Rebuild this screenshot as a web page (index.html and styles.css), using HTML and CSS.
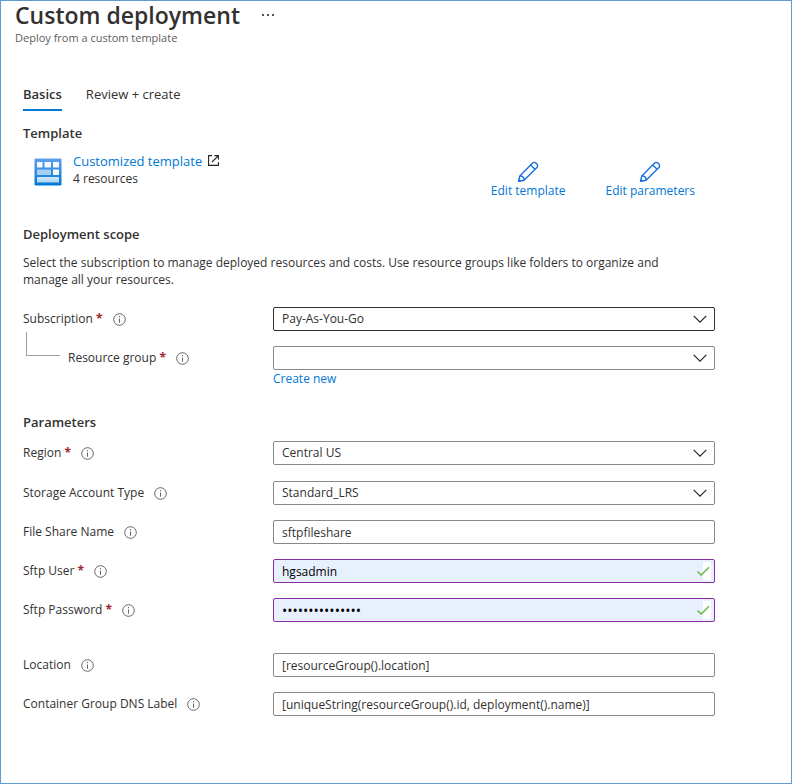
FILE: index.html
```html
<!DOCTYPE html>
<html lang="en">
<head>
    <meta charset="UTF-8">
    <meta name="viewport" content="width=device-width, initial-scale=1.0">
    <title>Custom deployment</title>
    <link rel="stylesheet" href="styles.css">
</head>
<body>
    <svg class="sprite" aria-hidden="true">
        <symbol id="info" viewBox="0 0 13 13">
            <circle cx="6.5" cy="6.5" r="5.8" fill="none" stroke="#666" stroke-width="1" />
            <path d="M6 3h1v1.3H6zM6 5.5h1v4.3H6z" fill="#666" />
        </symbol>
        <symbol id="pencil" viewBox="0 0 22 22">
            <path d="M1.5 21.500l1.3-5.600L15.600 3.100a2.300 2.300 0 0 1 3.300 0l1 1a2.300 2.300 0 0 1 0 3.300L7.100 20.200zM13.700 5l4.300 4.300M2.800 15.900c2.500 0 4.300 1.800 4.300 4.300" fill="none" stroke="#1b6fe0" stroke-width="1.4" stroke-linejoin="round" />
            <path d="M1.5 21.5l.6-2.6 2 2z" fill="#1b6fe0" />
        </symbol>
        <symbol id="chevron" viewBox="0 0 14 8">
            <path d="M.7.8L7 7.1 13.3.8" fill="none" stroke="#222" stroke-width="1.2" />
        </symbol>
        <symbol id="check" viewBox="0 0 14 18">
            <path d="M6 0h8v18H6z" fill="#fff" />
            <path d="M.5 9.5l3.7 3.5L12 5.3" fill="none" stroke="#6bb53f" stroke-width="1.4" />
        </symbol>
    </svg>

    <header>
        <div class="title">
            <h1>Custom deployment</h1>
            <button type="button" class="more" aria-label="More">
                <svg width="12" height="2" viewBox="0 0 12 2"><path d="M0 0h2v2H0zM5 0h2v2H5zM10 0h2v2h-2z" fill="#555" /></svg>
            </button>
        </div>
        <p>Deploy from a custom template</p>
    </header>

    <main>
        <nav>
            <a href="#basics" class="active">Basics</a>
            <a href="#review">Review + create</a>
        </nav>

        <section>
            <h2>Template</h2>
            <div class="template">
                <svg class="template-icon" width="28" height="28" viewBox="0 0 28 28">
                    <defs>
                        <linearGradient id="frame" x1="0" y1="0" x2="0" y2="1">
                            <stop offset="0" stop-color="#5ea0ef" />
                            <stop offset="1" stop-color="#0078d4" />
                        </linearGradient>
                        <linearGradient id="tile" x1="0" y1="0" x2="0" y2="1">
                            <stop offset="0" stop-color="#d6e9fc" />
                            <stop offset="1" stop-color="#a9d3f7" />
                        </linearGradient>
                    </defs>
                    <rect x=".5" y=".5" width="27" height="27" rx="1" fill="url(#frame)" />
                    <path d="M3 4h5.5v5.5H3zM10.5 4H17v5.5h-6.5zM19 4h6v5.5h-6zM19 11.5h6V17h-6z" fill="#f7faff" />
                    <path d="M3 11.5h14V17H3z" fill="#a9cff7" />
                    <path d="M3 19h22v5.5H3z" fill="url(#tile)" />
                </svg>
                <div class="template-text">
                    <a href="#template">Customized template
                        <svg width="11" height="11" viewBox="0 0 11 11"><path d="M4 .6H.6v9.8h9.8V7M6.5.6h3.9v4M10.2.8L4 7" fill="none" stroke="#222" stroke-width="1.1" /></svg>
                    </a>
                    <span>4 resources</span>
                </div>
                <div class="actions">
                    <button type="button"><svg width="22" height="22"><use href="#pencil" /></svg>Edit template</button>
                    <button type="button"><svg width="22" height="22"><use href="#pencil" /></svg>Edit parameters</button>
                </div>
            </div>
        </section>

        <section class="scope">
            <h2>Deployment scope</h2>
            <p>Select the subscription to manage deployed resources and costs. Use resource groups like folders to organize and manage all your resources.</p>
            <div class="row">
                <div class="label">
                    <label for="subscription">Subscription <b>*</b></label>
                    <button type="button" class="info" aria-label="About subscription"><svg width="13" height="13"><use href="#info" /></svg></button>
                </div>
                <div class="control">
                    <select id="subscription" class="focused"><option>Pay-As-You-Go</option></select>
                    <svg class="chevron" width="14" height="8"><use href="#chevron" /></svg>
                </div>
            </div>
            <div class="row child">
                <div class="label">
                    <label for="group">Resource group <b>*</b></label>
                    <button type="button" class="info" aria-label="About resource group"><svg width="13" height="13"><use href="#info" /></svg></button>
                </div>
                <div class="control">
                    <select id="group"><option></option></select>
                    <svg class="chevron" width="14" height="8"><use href="#chevron" /></svg>
                </div>
            </div>
            <a href="#new" class="create">Create new</a>
        </section>

        <section class="parameters">
            <h2>Parameters</h2>
            <div class="row region">
                <div class="label">
                    <label for="region">Region <b>*</b></label>
                    <button type="button" class="info" aria-label="About region"><svg width="13" height="13"><use href="#info" /></svg></button>
                </div>
                <div class="control">
                    <select id="region"><option>Central US</option></select>
                    <svg class="chevron" width="14" height="8"><use href="#chevron" /></svg>
                </div>
            </div>
            <div class="row">
                <div class="label">
                    <label for="storage">Storage Account Type</label>
                    <button type="button" class="info" aria-label="About storage account type"><svg width="13" height="13"><use href="#info" /></svg></button>
                </div>
                <div class="control">
                    <select id="storage"><option>Standard_LRS</option></select>
                    <svg class="chevron" width="14" height="8"><use href="#chevron" /></svg>
                </div>
            </div>
            <div class="row">
                <div class="label">
                    <label for="share">File Share Name</label>
                    <button type="button" class="info" aria-label="About file share name"><svg width="13" height="13"><use href="#info" /></svg></button>
                </div>
                <div class="control">
                    <input type="text" id="share" value="sftpfileshare">
                </div>
            </div>
            <div class="row">
                <div class="label">
                    <label for="user">Sftp User <b>*</b></label>
                    <button type="button" class="info" aria-label="About sftp user"><svg width="13" height="13"><use href="#info" /></svg></button>
                </div>
                <div class="control">
                    <input type="text" id="user" class="valid" value="hgsadmin">
                    <svg class="check" width="14" height="18"><use href="#check" /></svg>
                </div>
            </div>
            <div class="row">
                <div class="label">
                    <label for="password">Sftp Password <b>*</b></label>
                    <button type="button" class="info" aria-label="About sftp password"><svg width="13" height="13"><use href="#info" /></svg></button>
                </div>
                <div class="control">
                    <input type="password" id="password" class="valid" value="sftpsftpsftpsft">
                    <svg class="check" width="14" height="18"><use href="#check" /></svg>
                </div>
            </div>
            <div class="row spaced">
                <div class="label">
                    <label for="location">Location</label>
                    <button type="button" class="info" aria-label="About location"><svg width="13" height="13"><use href="#info" /></svg></button>
                </div>
                <div class="control">
                    <input type="text" id="location" value="[resourceGroup().location]">
                </div>
            </div>
            <div class="row">
                <div class="label">
                    <label for="dns">Container Group DNS Label</label>
                    <button type="button" class="info" aria-label="About container group DNS label"><svg width="13" height="13"><use href="#info" /></svg></button>
                </div>
                <div class="control">
                    <input type="text" id="dns" value="[uniqueString(resourceGroup().id, deployment().name)]">
                </div>
            </div>
        </section>
    </main>
</body>
</html>
```
FILE: styles.css
```css
:root {
    --text: #323130;
    --grey: #605e5c;
    --link: #0078d4;
    --border: #8a8886;
    --purple: #8a2da5;
    --frame: #5b9bd5;
}
* {
    margin: 0;
    padding: 0;
    box-sizing: border-box;
}
body {
    min-height: 100vh;
    border: 1px solid var(--frame);
    background-color: #ffffff;
    color: var(--text);
    font-family: "Segoe UI", "Open Sans", "Noto Sans", sans-serif;
    font-size: 12px;
    line-height: 18px;
}
a {
    color: var(--link);
    text-decoration: none;
}
button {
    border: none;
    background: none;
    font: inherit;
    cursor: pointer;
}
svg {
    display: block;
}
.sprite {
    position: absolute;
    width: 0;
    height: 0;
}

header {
    padding: 0 14px;
}
.title {
    display: flex;
    align-items: center;
    gap: 22px;
}
header h1 {
    font-size: 23px;
    font-weight: 600;
    line-height: 28px;
}
header p {
    color: var(--grey);
    font-size: 11px;
    line-height: 18px;
}

main {
    padding: 38px 76px 36px 22px;
}
nav {
    display: flex;
    gap: 24px;
    font-size: 13px;
}
nav a {
    height: 26px;
    color: var(--text);
}
nav a.active {
    border-bottom: 2px solid var(--link);
    font-weight: 600;
}
h2 {
    font-size: 13px;
    font-weight: 600;
    line-height: 18px;
}
section {
    padding-top: 13px;
}

.template {
    display: flex;
    padding: 10px 20px 0 11px;
}
.template-icon {
    margin-top: 6px;
}
.template-text {
    margin-left: 11px;
}
.template-text a {
    display: flex;
    gap: 6px;
    font-size: 13px;
}
.template-text svg {
    margin-top: 3px;
}
.actions {
    display: flex;
    gap: 40px;
    margin-left: auto;
    padding-top: 8px;
}
.actions button {
    display: flex;
    flex-direction: column;
    align-items: center;
    color: var(--link);
}

.scope {
    padding-top: 25px;
}
.scope p {
    margin: 11px 0 19px;
    padding-right: 24px;
    line-height: 17px;
}
.row {
    display: flex;
    align-items: center;
    margin-bottom: 15px;
}
.label {
    display: flex;
    align-items: center;
    gap: 10px;
    width: 250px;
}
.label b {
    color: #a4262c;
}
.control {
    position: relative;
    flex: 1;
}
.child {
    margin-bottom: 0;
}
.child .label {
    padding-left: 45px;
    position: relative;
}
.child .label::before {
    content: "";
    position: absolute;
    left: 3px;
    bottom: 11px;
    width: 33px;
    height: 23px;
    border-left: 1px solid #a19f9d;
    border-bottom: 1px solid #a19f9d;
}
.create {
    display: block;
    margin-left: 250px;
}
.parameters {
    padding-top: 25px;
}
.parameters h2 {
    margin-bottom: 10px;
}
.region {
    margin-bottom: 16px;
}
.spaced {
    margin-top: 31px;
}

select,
input {
    display: block;
    width: 100%;
    height: 24px;
    padding: 0 8px;
    border: 1px solid var(--border);
    border-radius: 2px;
    background-color: #ffffff;
    color: var(--text);
    font: inherit;
    appearance: none;
}
select.focused {
    border-color: var(--text);
}
input.valid {
    border-color: var(--purple);
    background-color: #e8f0fe;
    color: #000000;
}
input[type="password"] {
    font-size: 14px;
}
.chevron {
    position: absolute;
    top: 8px;
    right: 8px;
    pointer-events: none;
}
.check {
    position: absolute;
    top: 3px;
    right: 4px;
    pointer-events: none;
}
```
